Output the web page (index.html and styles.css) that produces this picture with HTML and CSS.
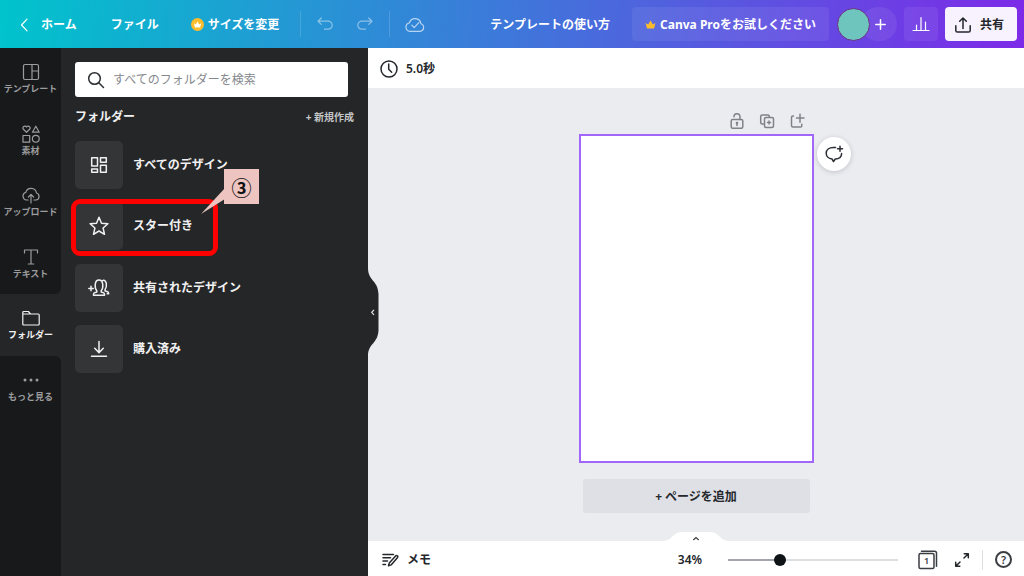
FILE: index.html
```html
<!DOCTYPE html>
<html lang="ja">
<head>
<meta charset="utf-8">
<meta name="viewport" content="width=device-width, initial-scale=1">
<title>テンプレートの使い方</title>
<link rel="stylesheet" href="styles.css">
</head>
<body>
<div class="app">
  <header class="header">
    <nav class="header-left" aria-label="メニュー">
      <a class="home" href="#home">
        <svg width="8" height="14" viewBox="0 0 8 14" class="line"><path d="M7 1.2 1.500 7 7 12.800"/></svg>
        ホーム</a>
      <button class="bar-button" type="button">ファイル</button>
      <button class="bar-button resize" type="button">
        <svg width="13" height="13" viewBox="0 0 13 13"><circle cx="6.500" cy="6.500" r="6.500" fill="#fdbc2c"/><path fill="#fff" d="M3.900 9.600 2.800 5.200l2.100 1.300L6.500 3.300l1.600 3.200 2.100-1.300-1.100 4.400z"/></svg>
        サイズを変更</button>
      <span class="rule"></span>
      <div class="history">
        <button class="bar-button dim" type="button" aria-label="元に戻す">
          <svg width="16" height="14" viewBox="0 0 16 14" class="line"><path d="M4.300 1 1 4.200l3.300 3.200M1 4.200h10.200a4 4 0 0 1 0 8H7.500"/></svg>
        </button>
        <button class="bar-button dim" type="button" aria-label="やり直し">
          <svg width="16" height="14" viewBox="0 0 16 14" class="line"><path d="M11.700 1 15 4.200l-3.300 3.200M15 4.200H4.800a4 4 0 0 0 0 8h3.700"/></svg>
        </button>
      </div>
      <span class="rule"></span>
      <button class="bar-button saved" type="button" aria-label="保存済み">
        <svg width="20" height="16" viewBox="0 0 20 16" class="line"><path d="M5 14.300h10a3.900 3.900 0 0 0 .9-7.600A5.900 5.900 0 0 0 4.400 5.800 4.300 4.300 0 0 0 5 14.300z"/><path d="m6.800 8.200 2.400 2.400 4.600-5"/></svg>
      </button>
    </nav>
    <div class="header-right">
      <button class="bar-button title" type="button">テンプレートの使い方</button>
      <button class="bar-button pro" type="button">
        <svg width="11" height="9" viewBox="0 0 11 9"><path fill="#fdbc2c" d="M2 8.500.6 2.900l2.500 1.600L5.500.4l2.400 4.100 2.500-1.600L9 8.500z"/></svg>
        Canva Proをお試しください</button>
      <div class="people">
        <span class="avatar"></span>
        <button class="bar-button add-person" type="button" aria-label="メンバーを追加">
          <svg width="11" height="11" viewBox="0 0 11 11" class="line thick"><path d="M5.500.8v9.400M.8 5.500h9.400"/></svg>
        </button>
      </div>
      <button class="bar-button stats" type="button" aria-label="インサイト">
        <svg width="18" height="16" viewBox="0 0 18 16" class="line"><path d="M1 14.500h16M4.500 14.500V9M9 14.500V1.500M13.500 14.500V6"/></svg>
      </button>
      <button class="share" type="button">
        <svg width="16" height="16" viewBox="0 0 16 16" class="line thick"><path d="M.8 8.800v4.600q0 1.600 1.600 1.600h11.200q1.600 0 1.600-1.600V8.800M8 11.500V1.200M4.700 4.300 8 1l3.300 3.300"/></svg>
        共有</button>
    </div>
  </header>

  <nav class="rail" aria-label="ツール">
    <div class="rail-items">
      <a class="rail-item" href="#templates">
        <svg width="18" height="18" viewBox="0 0 18 18" class="line"><rect x="1.500" y="1.500" width="15" height="15" rx="1.500"/><path d="M10 1.500v15M10 8h6.500"/></svg>
        テンプレート</a>
      <a class="rail-item" href="#elements">
        <svg width="18" height="18" viewBox="0 0 18 18" class="line"><path d="M4.500 7.300 1.400 4.300C-.2 2.300 2.700-.4 4.500 2 6.300-.4 9.200 2.300 7.600 4.300zM13.800 1.200l3.400 6h-6.800zM1 10.500h6.700v6.700H1z"/><circle cx="13.800" cy="13.800" r="3.400"/></svg>
        素材</a>
      <a class="rail-item" href="#uploads">
        <svg width="18" height="18" viewBox="0 0 18 18" class="line"><path d="M6.200 14H4.500a3.900 3.900 0 0 1-.7-7.600 5.500 5.500 0 0 1 10.700.6A3.600 3.600 0 0 1 14 14h-2.200M9 17V8.500M6.400 11 9 8.400l2.600 2.600"/></svg>
        アップロード</a>
      <a class="rail-item" href="#text">
        <svg width="18" height="18" viewBox="0 0 18 18" class="line"><path d="M2.500 5V2h13v3M9 2v14M6.300 16h5.400"/></svg>
        テキスト</a>
      <a class="rail-item current" href="#folders" aria-current="page">
        <svg width="18" height="18" viewBox="0 0 18 18" class="line"><path d="M.8 15V3.500q0-1 1-1h4.600L8.500 5h7.700q1 0 1 1v9q0 1-1 1H1.800q-1 0-1-1zM.8 5h7.700"/></svg>
        フォルダー</a>
      <a class="rail-item" href="#more">
        <svg width="18" height="18" viewBox="0 0 18 18" fill="currentColor"><circle cx="3" cy="9" r="1.500"/><circle cx="9" cy="9" r="1.500"/><circle cx="15" cy="9" r="1.500"/></svg>
        もっと見る</a>
    </div>
  </nav>

  <aside class="panel">
    <label class="search">
      <svg width="18" height="18" viewBox="0 0 18 18" class="line thick"><circle cx="7.500" cy="7.500" r="5.800"/><path d="m11.800 11.800 4.700 4.700"/></svg>
      <input class="search-input" type="search" placeholder="すべてのフォルダーを検索" aria-label="すべてのフォルダーを検索">
    </label>
    <div class="panel-head">
      <h2 class="panel-title">フォルダー</h2>
      <button class="create" type="button">+ 新規作成</button>
    </div>
    <ul class="folders">
      <li class="folder">
        <a class="folder-link" href="#all">
          <span class="tile"><svg width="18" height="18" viewBox="0 0 18 18" class="line thick"><path d="M1.700 1.700h5.800v8.300H1.700zM10.500 1.700h5.800v4.600h-5.800zM1.700 13h5.800v3.300H1.700zM10.500 9.300h5.800v7h-5.800z"/></svg></span>
          すべてのデザイン</a>
      </li>
      <li class="folder">
        <a class="folder-link" href="#starred">
          <span class="tile"><svg width="20" height="20" viewBox="0 0 20 20" class="line thick"><path d="m10 1.300 2.500 5.900 6.400.6-4.800 4.200 1.400 6.300-5.500-3.300-5.500 3.300L5.900 12 1.100 7.800l6.400-.6z"/></svg></span>
          スター付き</a>
        <span class="highlight"></span>
        <div class="callout">
          <svg class="callout-tail" width="24" height="26" viewBox="0 0 24 26"><path fill="#edc4c0" d="M24 0 0 26 24 11z"/></svg>
          <span class="callout-label">③</span>
        </div>
      </li>
      <li class="folder">
        <a class="folder-link" href="#shared">
          <span class="tile"><svg width="22" height="20" viewBox="0 0 22 20" class="line thick"><path d="M.8 10.500h4.400M3 8.300v4.400M5.500 17.300v-1q0-1.300 1.600-1.700l1.700-.6v-1.300C6.700 10.700 6 2 11 2s4.300 8.700 2.200 10.700V14l1.700.6q1.600.4 1.600 1.700v1zM14.800 2.400c4.500-.8 4.200 7 2.200 9.300v1.200l2 .6q1.700.5 1.700 2.300h-1.500"/></svg></span>
          共有されたデザイン</a>
      </li>
      <li class="folder">
        <a class="folder-link" href="#purchased">
          <span class="tile"><svg width="18" height="18" viewBox="0 0 18 18" class="line thick"><path d="M9 1.500v11M4.700 8.300 9 12.600l4.300-4.300M1.500 16.200h15"/></svg></span>
          購入済み</a>
      </li>
    </ul>
    <button class="collapse" type="button" aria-label="パネルを閉じる">
      <svg width="11" height="88" viewBox="0 0 11 88"><path fill="#252627" d="M0 0c0 13 10 12 10.500 26v36C10 76 0 75 0 88z"/><path fill="none" stroke="#e4e4e6" stroke-width="1.200" d="m6 41.800-2.300 2.500L6 46.800"/></svg>
    </button>
  </aside>

  <main class="editor">
    <div class="timing">
      <button class="timing-button" type="button">
        <svg width="18" height="18" viewBox="0 0 18 18" class="line thick"><circle cx="9" cy="9" r="8"/><path d="M8.700 4v5.300l3 3"/></svg>
        5.0秒</button>
    </div>
    <section class="stage" aria-label="キャンバス">
      <div class="page-tools">
        <button class="tool" type="button" aria-label="ロック">
          <svg width="16" height="16" viewBox="0 0 16 16" class="line thick"><rect x="2.200" y="6.500" width="11.600" height="8.700" rx="1.500"/><path d="M5 3.800a3 3 0 0 1 6-.3v3M8 10v2.500"/><circle cx="8" cy="10" r=".6"/></svg>
        </button>
        <button class="tool" type="button" aria-label="ページを複製">
          <svg width="16" height="16" viewBox="0 0 16 16" class="line thick"><path d="M4.500 11H3.200q-1.500 0-1.500-1.500v-6Q1.700 2 3.200 2h5.600q1.500 0 1.500 1.500v.7"/><rect x="5.500" y="4.500" width="9" height="10" rx="1.500"/><path d="M10 8v3M8.500 9.500h3"/></svg>
        </button>
        <button class="tool" type="button" aria-label="ページを追加">
          <svg width="16" height="16" viewBox="0 0 16 16" class="line thick"><path d="M4.500 3H4Q2.500 3 2.500 4.500v8Q2.500 14 4 14h7.500q1.300 0 1.300-1.300v-1.500M7.500 5h7.500M11 1.200v8"/></svg>
        </button>
      </div>
      <div class="page"></div>
      <button class="comment" type="button" aria-label="コメントを追加">
        <svg width="20" height="20" viewBox="0 0 20 20" class="line thick"><path d="M11.500 3.500h-2C5 3.500 2.200 6 2.200 9.300c0 3.200 2.700 5.400 5.800 5.700l1.500 2.500 1.800-2.500c3.800-.3 6.300-2.600 6.300-5.600M16 2.300v5M13.500 4.800h5"/></svg>
      </button>
      <button class="add-page" type="button">+ ページを追加</button>
    </section>
    <footer class="status">
      <button class="status-button notes" type="button">
        <svg width="17" height="16" viewBox="0 0 17 16" class="line thick"><path d="M1 2.500h10.500M1 5.800h7.500M1 9.100h4.500M1 12.400h2.500M6.500 13.700l.8-2.700 6.300-7.100q.9-.8 1.800 0 .9.900 0 1.800l-6.300 7.200z"/></svg>
        メモ</button>
      <button class="drawer" type="button" aria-label="ページ一覧を開く">
        <svg width="68" height="10" viewBox="0 0 68 10"><path fill="#fff" d="M0 10C11 10 10 1 20 1h28c10 0 9 9 20 9z"/><path fill="none" stroke="#3a3d42" stroke-width="1.200" d="m31.300 9 2.700-2.400L36.700 9"/></svg>
      </button>
      <div class="view">
        <button class="status-button" type="button">34%</button>
        <input class="zoom" type="range" min="0" max="100" value="29" aria-label="ズーム">
        <button class="status-button" type="button" aria-label="ページ 1">
          <span class="page-count"><svg width="20" height="20" viewBox="0 0 20 20" class="line thick"><rect x="1" y="3.500" width="15" height="15" rx="1.500"/><path d="M3.500 1.200h13q2 0 2 2v13"/></svg><span class="page-number">1</span></span>
        </button>
        <button class="status-button" type="button" aria-label="全画面表示">
          <svg width="16" height="16" viewBox="0 0 16 16" class="line thick"><path d="M10 6l4-4M10.200 1.700h4.100v4.100M6 10l-4 4M5.800 14.300H1.700v-4.100"/></svg>
        </button>
        <span class="status-rule"></span>
        <button class="status-button" type="button" aria-label="ヘルプ">
          <span class="help">?</span>
        </button>
      </div>
    </footer>
  </main>
</div>
</body>
</html>
```

FILE: styles.css
```css
* {
  box-sizing: border-box;
}

body {
  margin: 0;
  font: 700 12px/16px "Noto Sans", "Noto Sans CJK JP", sans-serif;
  color: #24272b;
}

button {
  font: inherit;
  color: inherit;
  background: none;
  border: 0;
  padding: 0;
  white-space: nowrap;
}

a {
  color: inherit;
  text-decoration: none;
}

svg {
  display: block;
  flex: none;
}

.line {
  fill: none;
  stroke: currentColor;
  stroke-width: 1.2;
  stroke-linecap: round;
  stroke-linejoin: round;
}

.thick {
  stroke-width: 1.5;
}

.app {
  display: grid;
  grid-template: 48px minmax(0, 1fr) / 61px 307px minmax(0, 1fr);
  height: 100vh;
  min-height: 540px;
}

/* Header */

.header {
  grid-column: 1 / -1;
  display: flex;
  align-items: center;
  justify-content: space-between;
  padding: 0 7px 0 20px;
  background: linear-gradient(95deg, #00c4cc, #7d2ae8);
  color: #fff;
}

.header-left,
.header-right,
.history,
.people,
.home,
.bar-button,
.share {
  display: flex;
  align-items: center;
}

.home,
.header-left > .bar-button,
.title {
  padding-top: 1px;
}

.home {
  gap: 13px;
  margin-right: 34px;
}

.resize {
  gap: 4px;
  margin: 0 21px 0 32px;
}

.rule {
  width: 1px;
  height: 26px;
  background: rgb(255 255 255 / 15%);
}

.history {
  gap: 24px;
  padding: 0 16px;
}

.dim {
  opacity: 0.45;
}

.saved {
  margin-left: 15px;
  opacity: 0.65;
}

.title {
  margin-right: 22px;
}

.pro {
  justify-content: center;
  gap: 4px;
  width: 197px;
  height: 34px;
  margin-right: 8px;
  padding-top: 1px;
  border-radius: 4px;
  background: rgb(255 255 255 / 7%);
}

.people {
  margin-right: 7px;
}

.avatar {
  z-index: 1;
  width: 33px;
  height: 33px;
  border: 1px solid #6b2f86;
  border-radius: 50%;
  background: #6ec5bd;
}

.add-person {
  justify-content: flex-end;
  width: 36px;
  height: 34px;
  margin-left: -9px;
  padding-right: 11px;
  border-radius: 17px;
  background: rgb(255 255 255 / 7%);
}

.stats {
  justify-content: center;
  width: 34px;
  height: 34px;
  margin-right: 7px;
  border-radius: 4px;
  background: rgb(255 255 255 / 7%);
}

.share {
  justify-content: center;
  gap: 9px;
  width: 72px;
  height: 34px;
  padding: 1px 3px 0 0;
  border-radius: 4px;
  background: #f7f2fe;
  color: #24272b;
}

/* Tool rail */

.rail {
  background: #18191b;
  color: #9b9c9e;
  font-size: 9px;
  line-height: 14px;
}

.rail-items {
  display: grid;
  grid-template-rows: repeat(6, 1fr);
  height: 369px;
  background: #252627;
}

.rail-item {
  display: flex;
  flex-direction: column;
  align-items: center;
  justify-content: center;
  gap: 1px;
  padding-top: 2px;
  background: #18191b;
  white-space: nowrap;
}

.rail-item:nth-child(4) {
  border-bottom-right-radius: 6px;
}

.rail-item.current {
  background: #252627;
  color: #f1f1f2;
}

.rail-item.current + .rail-item {
  border-top-right-radius: 6px;
}

/* Folder panel */

.panel {
  position: relative;
  z-index: 1;
  padding: 14px;
  background: #252627;
  color: #f1f1f2;
}

.search {
  display: flex;
  align-items: center;
  gap: 8px;
  height: 35px;
  margin-right: 6px;
  padding: 0 12px;
  border-radius: 3px;
  background: #fff;
  color: #2b2e33;
}

.search-input {
  flex: 1;
  min-width: 0;
  padding: 0;
  border: 0;
  outline: 0;
  background: none;
  font: inherit;
  font-weight: 400;
  color: inherit;
}

.search-input::placeholder {
  color: #85888d;
}

.panel-head {
  display: flex;
  align-items: center;
  justify-content: space-between;
  height: 37px;
  padding-top: 3px;
}

.panel-title {
  margin: 0;
  font-size: 12px;
}

.create {
  font-size: 10px;
  color: #c4c5c7;
}

.folders {
  display: grid;
  grid-template-rows: repeat(4, 1fr);
  height: 246px;
  margin: 0;
  padding: 0;
  list-style: none;
}

.folder {
  position: relative;
  display: flex;
  align-items: center;
}

.folder-link {
  display: flex;
  align-items: center;
  gap: 10px;
}

.tile {
  display: grid;
  place-items: center;
  width: 48px;
  height: 48px;
  border-radius: 5px;
  background: #343537;
}

.highlight {
  position: absolute;
  top: 3px;
  left: -4px;
  width: 147px;
  height: 57px;
  border: 5px solid #fe0000;
  border-radius: 9px;
}

.callout {
  position: absolute;
  z-index: 1;
  top: -27px;
  left: 149px;
  display: grid;
  place-items: center;
  width: 35px;
  height: 35px;
  padding-top: 5px;
  background: #edc4c0;
  color: #111;
}

.callout-tail {
  position: absolute;
  top: 19px;
  right: 34px;
}

.callout-label {
  font-size: 20px;
  line-height: 30px;
}

.collapse {
  position: absolute;
  top: 220px;
  left: 100%;
}

/* Editor */

.editor {
  display: flex;
  flex-direction: column;
  min-width: 0;
}

.timing {
  display: flex;
  align-items: center;
  height: 40px;
  padding: 2px 12px 0;
  background: #fff;
}

.timing-button,
.status-button {
  display: flex;
  align-items: center;
  gap: 8px;
  font-weight: 600;
}

.notes {
  font-weight: 700;
}

.stage {
  flex: 1;
  display: grid;
  grid-template-columns: 1fr 235px 1fr;
  align-content: start;
  padding-top: 25px;
  background: #ebecf0;
}

.page-tools {
  grid-column: 2;
  display: flex;
  justify-content: flex-end;
  gap: 14px;
  margin-bottom: 5px;
  padding-right: 9px;
  color: #808287;
}

.page {
  grid-column: 2;
  aspect-ratio: 5 / 7;
  border: 2px solid #a166fa;
  background: #fff;
}

.comment {
  grid-column: 3;
  display: grid;
  place-items: center;
  width: 34px;
  height: 34px;
  margin: 3px 0 0 3px;
  border-radius: 50%;
  background: #fff;
  box-shadow: 0 1px 5px rgb(40 45 60 / 22%);
  color: #2b2e33;
}

.add-page {
  grid-column: 2;
  height: 34px;
  margin: 16px 4px 0;
  padding-top: 2px;
  border-radius: 3px;
  background: #dfe0e5;
}

.status {
  position: relative;
  display: flex;
  align-items: center;
  justify-content: space-between;
  height: 35px;
  padding: 2px 12px 0 14px;
  background: #fff;
}

.drawer {
  position: absolute;
  bottom: 100%;
  left: 50%;
  transform: translateX(-50%);
}

.view {
  display: flex;
  align-items: center;
}

.zoom {
  width: 170px;
  height: 12px;
  margin: 0 20px 0 26px;
  appearance: none;
  background: linear-gradient(#a2a5ab, #a2a5ab) left / 30% 2px no-repeat,
    linear-gradient(#dcdee2, #dcdee2) center / 100% 2px no-repeat;
}

.zoom::-webkit-slider-thumb {
  appearance: none;
  width: 12px;
  height: 12px;
  border: 0;
  border-radius: 50%;
  background: #0e1318;
}

.page-count {
  display: grid;
  margin-right: 16px;
  color: #3a3d42;
}

.page-count > * {
  grid-area: 1 / 1;
}

.page-number {
  padding: 3px 3px 0 0;
  font-size: 9px;
}

.status-rule {
  width: 1px;
  height: 20px;
  margin: 0 12px;
  background: #dcdee2;
}

.help {
  width: 17px;
  height: 17px;
  border: 2px solid #3a3d42;
  border-radius: 50%;
  font-size: 11px;
  line-height: 13px;
  color: #3a3d42;
}
```
